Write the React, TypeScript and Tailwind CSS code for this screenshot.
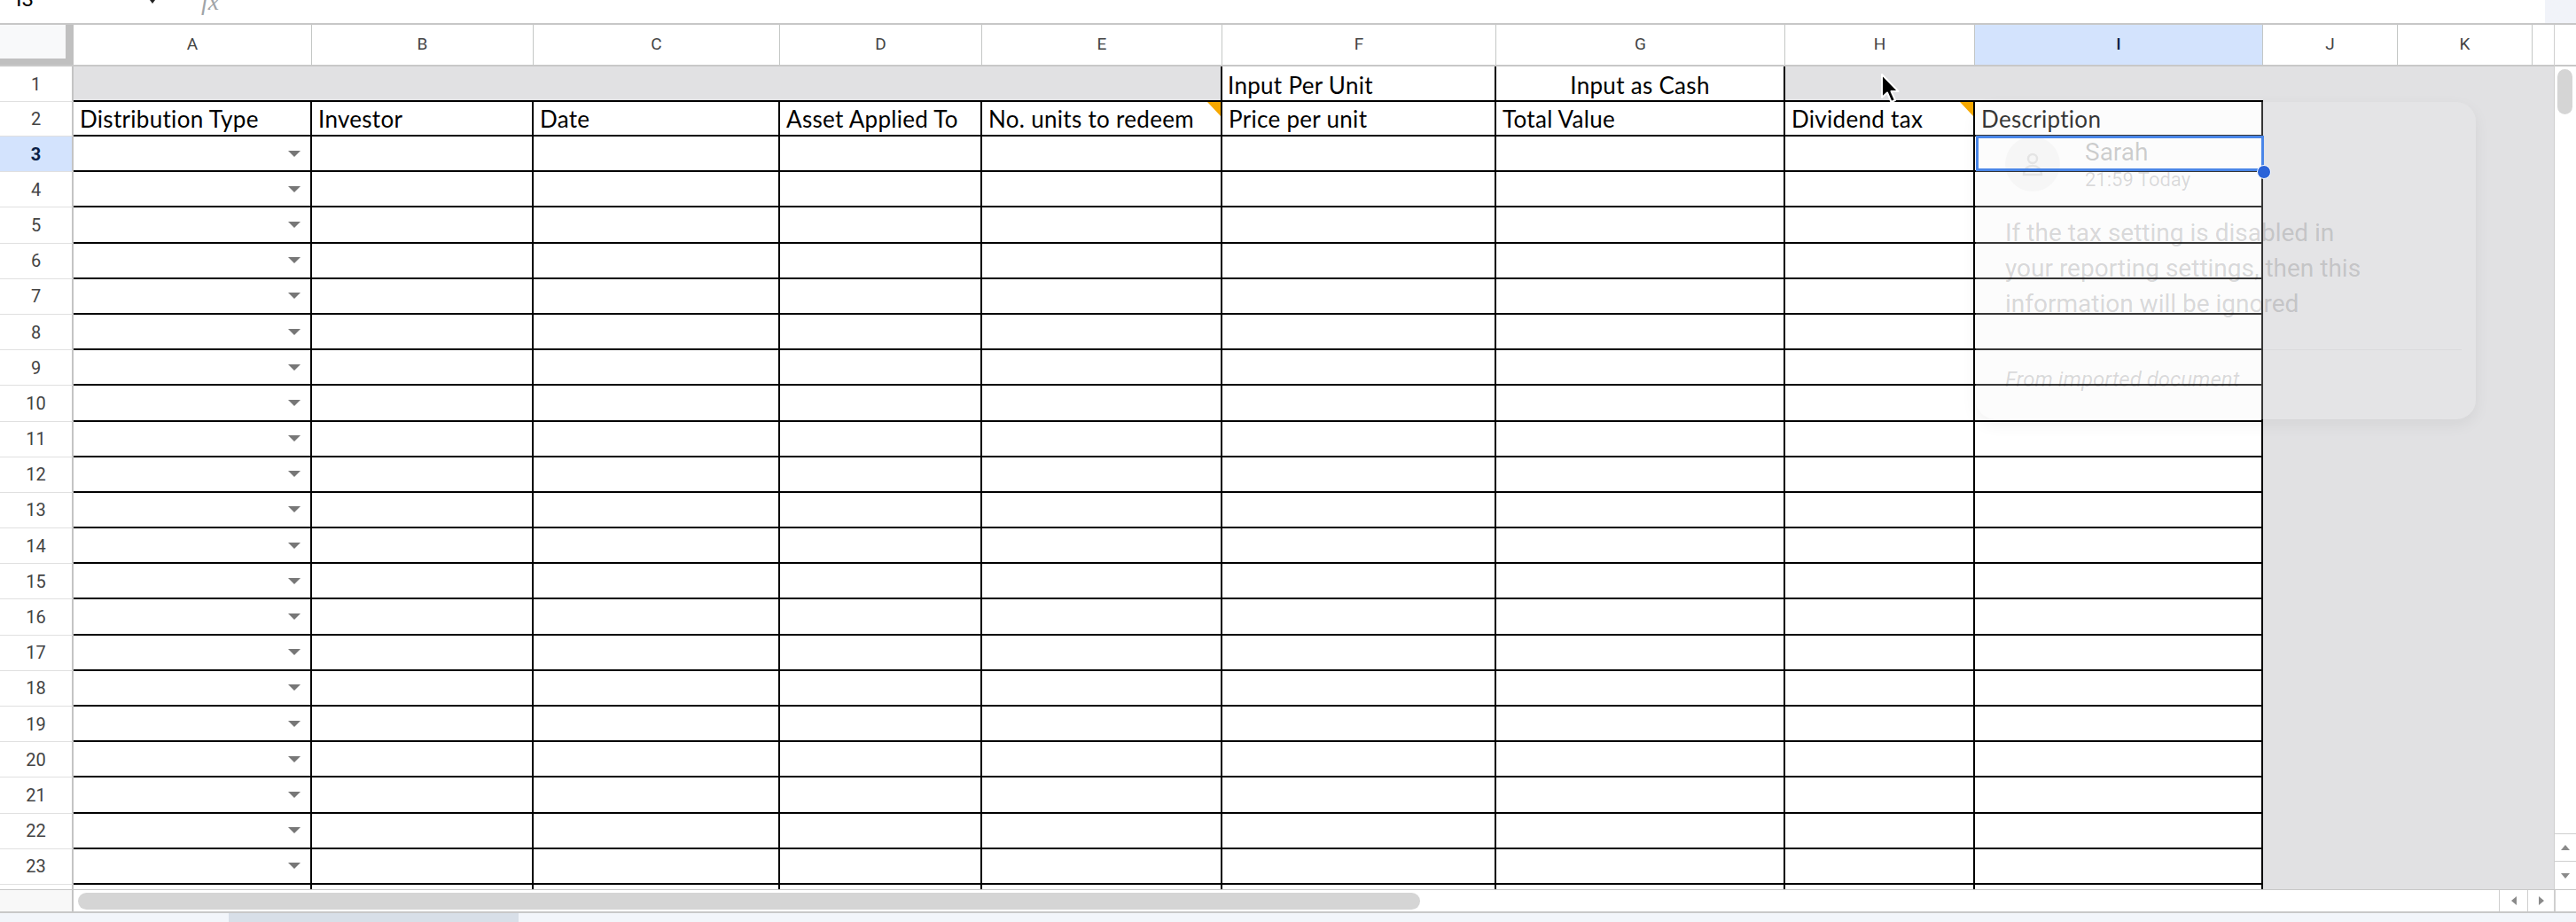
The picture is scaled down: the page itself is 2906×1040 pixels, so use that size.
import React from "react";

const bodyCols = [
  { w: "w-[269px]", l: "A", h: "Distribution Type" },
  { w: "w-[250px]", l: "B", h: "Investor" },
  { w: "w-[278px]", l: "C", h: "Date" },
  { w: "w-[228px]", l: "D", h: "Asset Applied To" },
  { w: "w-[271px]", l: "E", h: "No. units to redeem", note: true },
  { w: "w-[309px]", l: "F", h: "Price per unit" },
  { w: "w-[326px]", l: "G", h: "Total Value" },
  { w: "w-[214px]", l: "H", h: "Dividend tax", note: true },
  { w: "w-[325px]", l: "I", h: "Description" },
];

const cellFont = "font-['Lato',sans-serif] text-[26px] leading-[26px] tracking-[0.3px] text-black whitespace-nowrap";

function NoteMark() {
  return (
    <svg className="absolute right-0 top-0" width="15" height="16" viewBox="0 0 15 16">
      <path d="M0 0 H15 V16 Z" fill="#f6a800" />
    </svg>
  );
}

function DropArrow() {
  return (
    <svg width="14" height="7" viewBox="0 0 14 7">
      <path d="M0 0 H14 L7 7 Z" fill="#777777" />
    </svg>
  );
}

function RowHeader({ n, active }: { n: number; active?: boolean }) {
  return (
    <div
      className={
        active
          ? "w-[83px] shrink-0 flex items-center justify-center border-r-2 border-r-[#c4c4c4] border-b border-b-[#e0e0e0] bg-[#d3e3fd] text-[20px] font-bold text-[#0b1f45]"
          : "w-[83px] shrink-0 flex items-center justify-center border-r-2 border-r-[#c4c4c4] border-b border-b-[#e0e0e0] bg-white text-[20px] text-[#444444]"
      }
    >
      {n}
    </div>
  );
}

export default function App() {
  const rows = Array.from({ length: 22 }, (_, i) => i + 3);
  return (
    <div className="relative w-[2906px] h-[1040px] overflow-hidden bg-white font-['Roboto',sans-serif]">
      {/* formula bar (cut off) */}
      <div className="flex h-[28px] border-b-2 border-[#c7c7c7] overflow-hidden">
        <div className="flex items-start flex-1">
          <div className="w-[160px] pl-[18px]">
            <span className="block mt-[-13px] text-[24px] leading-[24px] text-black">I3</span>
          </div>
          <div className="w-[24px] flex justify-center">
            <svg className="mt-[-4px]" width="12" height="8" viewBox="0 0 12 8">
              <path d="M0 0 H12 L6 8 Z" fill="#222" />
            </svg>
          </div>
          <div className="ml-[43px]">
            <span className="block mt-[-12px] font-['Liberation_Serif',serif] italic text-[28px] leading-[28px] text-[#a0a4a8]">fx</span>
          </div>
        </div>
        <div className="w-[35px] bg-[#f1f3f9]" />
      </div>

      <div className="flex h-[975px]">
        {/* grid */}
        <div className="w-[2881px] overflow-hidden">
          {/* column headers */}
          <div className="flex h-[47px] border-b-2 border-[#c8c8c8]">
            <div className="w-[83px] shrink-0 bg-[#c0c0c0]">
              <div className="w-[74px] h-[38px] bg-[#f8f9fa]" />
            </div>
            {bodyCols.map((c) =>
              c.l === "I" ? (
                <div key={c.l} className={`${c.w} shrink-0 flex items-center justify-center border-r border-[#c4c7c5] bg-[#d3e3fd] text-[19px] font-medium text-[#0b1f45]`}>
                  {c.l}
                </div>
              ) : (
                <div key={c.l} className={`${c.w} shrink-0 flex items-center justify-center border-r border-[#c4c7c5] text-[19px] text-[#444444]`}>
                  {c.l}
                </div>
              )
            )}
            <div className="w-[152px] shrink-0 flex items-center justify-center border-r border-[#c4c7c5] text-[19px] text-[#444444]">J</div>
            <div className="w-[152px] shrink-0 flex items-center justify-center border-r border-[#c4c7c5] text-[19px] text-[#444444]">K</div>
            <div className="w-[24px] shrink-0" />
          </div>

          {/* row 1 */}
          <div className="flex h-[40px]">
            <RowHeader n={1} />
            <div className="w-[1025px] shrink-0 bg-[#e1e1e3] border-b-2 border-black" />
            <div className="w-[271px] shrink-0 bg-[#e1e1e3] border-b-2 border-r-2 border-black" />
            <div className={`w-[309px] shrink-0 border-b-2 border-r-2 border-black flex items-end pl-[6px] pb-[4px] ${cellFont}`}>Input Per Unit</div>
            <div className={`w-[326px] shrink-0 border-b-2 border-r-2 border-black flex items-end justify-center pb-[4px] ${cellFont}`}>Input as Cash</div>
            <div className="w-[539px] shrink-0 bg-[#e1e1e3] border-b-2 border-black" />
            <div className="w-[328px] shrink-0 bg-[#e1e1e3]" />
          </div>

          {/* row 2 */}
          <div className="flex h-[39px]">
            <RowHeader n={2} />
            {bodyCols.map((c) => (
              <div key={c.l} className={`relative ${c.w} shrink-0 border-b-2 border-r-2 border-black flex items-end pl-[7px] pb-[5px] ${cellFont}`}>
                {c.h}
                {c.note ? <NoteMark /> : null}
              </div>
            ))}
            <div className="w-[328px] shrink-0 bg-[#e1e1e3]" />
          </div>

          {/* data rows */}
          {rows.map((r) => (
            <div key={r} className="flex h-[40.19px]">
              <RowHeader n={r} active={r === 3} />
              {bodyCols.map((c) =>
                c.l === "A" ? (
                  <div key={c.l} className={`${c.w} shrink-0 border-b-2 border-r-2 border-black flex items-center justify-end pr-[11px]`}>
                    <DropArrow />
                  </div>
                ) : (
                  <div key={c.l} className={`${c.w} shrink-0 border-b-2 border-r-2 border-black bg-white`} />
                )
              )}
              <div className="w-[328px] shrink-0 bg-[#e1e1e3]" />
            </div>
          ))}
        </div>

        {/* vertical scrollbar */}
        <div className="w-[25px] border-l border-[#cfcfcf] bg-white flex flex-col">
          <div className="h-[47px] border-b-2 border-[#c8c8c8]" />
          <div className="mt-[3px] ml-[3px] w-[17px] h-[51px] rounded-full bg-[#d5d5d5]" />
          <div className="flex-1" />
          <div className="h-[31px] border-t border-[#cfcfcf] flex items-center justify-center">
            <svg width="10" height="6" viewBox="0 0 10 6"><path d="M0 6 H10 L5 0 Z" fill="#8a8a8a" /></svg>
          </div>
          <div className="h-[32px] border-t border-[#cfcfcf] flex items-center justify-center">
            <svg width="10" height="6" viewBox="0 0 10 6"><path d="M0 0 H10 L5 6 Z" fill="#8a8a8a" /></svg>
          </div>
        </div>
      </div>

      {/* horizontal scrollbar */}
      <div className="flex h-[27px] border-t border-b-2 border-[#c8c8c8]">
        <div className="w-[83px] shrink-0 bg-[#f8f8f8] border-r-2 border-[#c4c4c4]" />
        <div className="flex-1 flex items-center pl-[5px]">
          <div className="w-[1514px] h-[19px] rounded-full bg-[#d5d5d5]" />
        </div>
        <div className="w-[32px] shrink-0 border-l border-[#cfcfcf] flex items-center justify-center">
          <svg width="6" height="10" viewBox="0 0 6 10"><path d="M6 0 V10 L0 5 Z" fill="#8a8a8a" /></svg>
        </div>
        <div className="w-[30px] shrink-0 border-l border-[#cfcfcf] flex items-center justify-center">
          <svg width="6" height="10" viewBox="0 0 6 10"><path d="M0 0 V10 L6 5 Z" fill="#8a8a8a" /></svg>
        </div>
        <div className="w-[25px] shrink-0 border-l-2 border-[#cfcfcf]" />
      </div>

      {/* sheet tabs strip */}
      <div className="flex h-[10px] bg-[#f2f5fa]">
        <div className="ml-[258px] w-[327px] h-full bg-[#d8dfe8]" />
      </div>

      {/* comment card (fading) */}
      <div className="pointer-events-none absolute left-[2229px] top-[115px] w-[564px] h-[358px] rounded-[22px] bg-[rgba(240,240,243,0.22)] shadow-[0_6px_18px_rgba(0,0,0,0.06)] pl-[33px] pr-[16px] pt-[39px] font-['Roboto',sans-serif]">
        <div className="flex items-start">
          <div className="w-[62px] h-[62px] shrink-0 rounded-full bg-[rgba(0,0,0,0.025)] flex items-center justify-center">
            <svg width="30" height="30" viewBox="0 0 30 30" fill="none" stroke="rgba(0,0,0,0.07)" strokeWidth="2.5">
              <circle cx="15" cy="9" r="5" />
              <path d="M5 27 C5 20 10 17 15 17 C20 17 25 20 25 27 Z" />
            </svg>
          </div>
          <div className="ml-[28px] mt-[1px]">
            <div className="text-[28px] leading-[34px] text-[rgba(32,33,36,0.22)]">Sarah</div>
            <div className="text-[22px] leading-[28px] text-[rgba(32,33,36,0.16)]">21:59 Today</div>
          </div>
        </div>
        <div className="mt-[26px] text-[28px] leading-[40px] text-[rgba(32,33,36,0.18)] whitespace-nowrap">
          If the tax setting is disabled in
          <br />
          your reporting settings, then this
          <br />
          information will be ignored
        </div>
        <div className="mt-[31px] h-px bg-[rgba(0,0,0,0.035)]" />
        <div className="mt-[18px] italic text-[24px] leading-[30px] text-[rgba(32,33,36,0.16)]">From imported document</div>
      </div>

      {/* selection */}
      <div className="pointer-events-none absolute left-[2229px] top-[153px] w-[325px] h-[40px] border-[3px] border-[#4a86e8]" />
      <div className="pointer-events-none absolute left-[2546px] top-[186px] w-[16px] h-[16px] rounded-full bg-[#2a63d8] border border-white" />

      {/* mouse cursor */}
      <svg className="pointer-events-none absolute left-[2121px] top-[82px]" width="24" height="36" viewBox="0 0 24 36">
        <path d="M2 2 L2 28 L8 22.5 L12.5 33 L17 31 L12.5 21 L20.5 21 Z" fill="#000" stroke="#fff" strokeWidth="2" strokeLinejoin="round" />
      </svg>
    </div>
  );
}
